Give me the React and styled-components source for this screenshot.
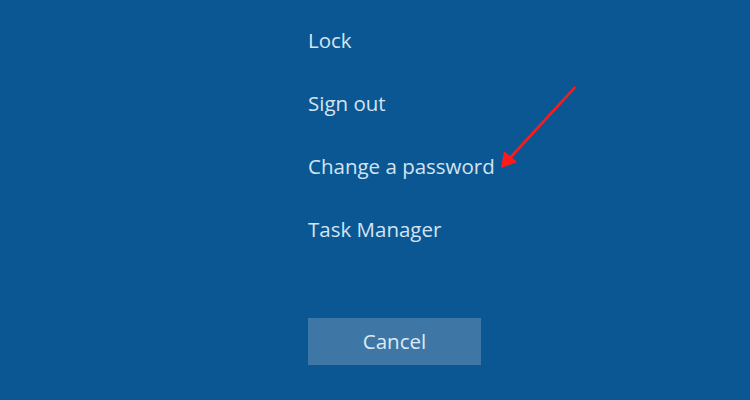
import React from 'react';
import styled, { createGlobalStyle } from 'styled-components';

const GlobalStyle = createGlobalStyle`
  html, body {
    margin: 0;
    padding: 0;
    background: #0b5794;
  }
`;

const Screen = styled.div`
  position: relative;
  width: 750px;
  height: 400px;
  background: #0b5794;
  overflow: hidden;
  font-family: 'Open Sans', 'Noto Sans', sans-serif;
`;

const Menu = styled.div`
  display: flex;
  flex-direction: column;
  padding: 25px 0 0 308px;
`;

const Option = styled.div`
  height: 63px;
  line-height: 30px;
  font-size: 20.5px;
  color: #d4e4f1;
`;

const Footer = styled.div`
  padding: 41px 0 0 308px;
`;

const CancelButton = styled.button`
  width: 173px;
  height: 47px;
  border: none;
  background: #3e77a6;
  color: #dfeaf3;
  font-family: inherit;
  font-size: 20.5px;
  padding: 0 0 2px;
`;

const Arrow = styled.svg`
  position: absolute;
  left: 495px;
  top: 82px;
`;

const App = () => {
  return (
    <Screen>
      <GlobalStyle />
      <Menu>
        <Option>Lock</Option>
        <Option>Sign out</Option>
        <Option>Change a password</Option>
        <Option>Task Manager</Option>
      </Menu>
      <Footer>
        <CancelButton>Cancel</CancelButton>
      </Footer>
      <Arrow width="90" height="95" viewBox="0 0 90 95">
        <polygon points="79.5,4 81,6 15,78 13,76" fill="#ff1a1a" />
        <polygon points="6,86 9,69 22,80" fill="#ff1a1a" />
      </Arrow>
    </Screen>
  );
};

export default App;
